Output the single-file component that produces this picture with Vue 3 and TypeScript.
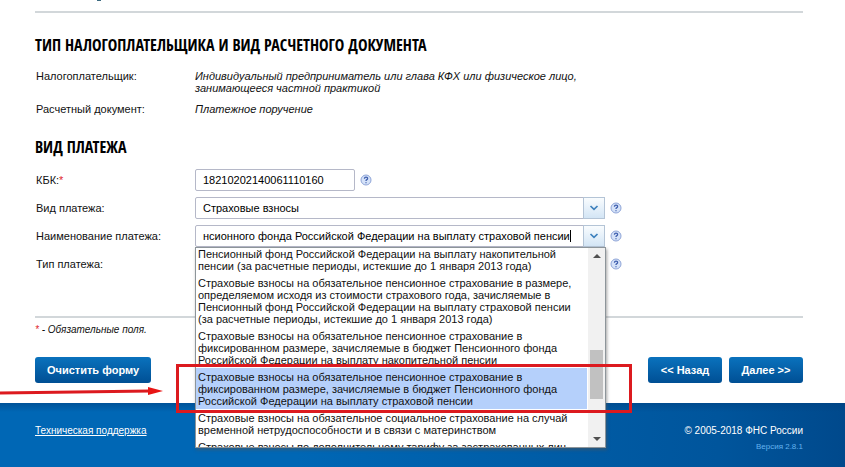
<script setup lang="ts">
import { ref } from 'vue'

interface Option {
  lines: string[]
  selected?: boolean
}

const kbk = ref('18210202140061110160')
const kind = ref('Страховые взносы')
const paymentName = ref('нсионного фонда Российской Федерации на выплату страховой пенсии')

const options: Option[] = [
  {
    lines: [
      'Пенсионный фонд Российской Федерации на выплату накопительной',
      'пенсии (за расчетные периоды, истекшие до 1 января 2013 года)',
    ],
  },
  {
    lines: [
      'Страховые взносы на обязательное пенсионное страхование в размере,',
      'определяемом исходя из стоимости страхового года, зачисляемые в',
      'Пенсионный фонд Российской Федерации на выплату страховой пенсии',
      '(за расчетные периоды, истекшие до 1 января 2013 года)',
    ],
  },
  {
    lines: [
      'Страховые взносы на обязательное пенсионное страхование в',
      'фиксированном размере, зачисляемые в бюджет Пенсионного фонда',
      'Российской Федерации на выплату накопительной пенсии',
    ],
  },
  {
    lines: [
      'Страховые взносы на обязательное пенсионное страхование в',
      'фиксированном размере, зачисляемые в бюджет Пенсионного фонда',
      'Российской Федерации на выплату страховой пенсии',
    ],
    selected: true,
  },
  {
    lines: [
      'Страховые взносы на обязательное социальное страхование на случай',
      'временной нетрудоспособности и в связи с материнством',
    ],
  },
  { lines: ['Страховые взносы по дополнительному тарифу за застрахованных лиц,'] },
]
</script>

<template>
  <div class="page">
    <main class="content">
      <div class="top"><i class="tail"></i></div>

      <h2>Тип налогоплательщика и вид расчетного документа</h2>
      <dl class="facts">
        <dt>Налогоплательщик:</dt>
        <dd>Индивидуальный предприниматель или глава КФХ или физическое лицо,<br />занимающееся частной практикой</dd>
        <dt>Расчетный документ:</dt>
        <dd>Платежное поручение</dd>
      </dl>

      <h2>Вид платежа</h2>
      <form class="fields" @submit.prevent>
        <label for="kbk">КБК:<span class="req">*</span></label>
        <div class="control">
          <input id="kbk" v-model="kbk" class="box kbk" type="text" />
          <button class="help" type="button" aria-label="?">
            <svg viewBox="0 0 12 12"><circle cx="6" cy="6" r="5" /><path d="M4.4 4.7Q4.5 3.2 6 3.2Q7.7 3.2 7.6 4.6Q7.5 5.4 6.5 5.9Q6 6.2 6 7M6 8.2V9.3" /></svg>
          </button>
        </div>

        <label for="kind">Вид платежа:</label>
        <div class="control">
          <div class="combo">
            <select id="kind" v-model="kind" class="box">
              <option>Страховые взносы</option>
            </select>
            <span class="trigger">
              <svg viewBox="0 0 10 6"><path d="M1.5 1L5 4.3L8.5 1" /></svg>
            </span>
          </div>
          <button class="help" type="button" aria-label="?">
            <svg viewBox="0 0 12 12"><circle cx="6" cy="6" r="5" /><path d="M4.4 4.7Q4.5 3.2 6 3.2Q7.7 3.2 7.6 4.6Q7.5 5.4 6.5 5.9Q6 6.2 6 7M6 8.2V9.3" /></svg>
          </button>
        </div>

        <label for="name">Наименование платежа:</label>
        <div class="control">
          <div class="combo">
            <input id="name" v-model="paymentName" class="box" type="text" role="combobox" aria-expanded="true" aria-controls="name-list" />
            <i class="caret"></i>
            <span class="trigger">
              <svg viewBox="0 0 10 6"><path d="M1.5 1L5 4.3L8.5 1" /></svg>
            </span>
            <div class="dropdown">
              <ul id="name-list" role="listbox">
                <li v-for="(option, i) in options" :key="i" role="option" :aria-selected="!!option.selected" :class="{ selected: option.selected }">
                  <span v-for="line in option.lines" :key="line">{{ line }}</span>
                </li>
              </ul>
              <div class="scrollbar">
                <i class="up"></i>
                <div class="track"><i class="thumb"></i></div>
                <i class="down"></i>
              </div>
            </div>
            <div class="mark"></div>
          </div>
          <button class="help" type="button" aria-label="?">
            <svg viewBox="0 0 12 12"><circle cx="6" cy="6" r="5" /><path d="M4.4 4.7Q4.5 3.2 6 3.2Q7.7 3.2 7.6 4.6Q7.5 5.4 6.5 5.9Q6 6.2 6 7M6 8.2V9.3" /></svg>
          </button>
        </div>

        <label for="type">Тип платежа:</label>
        <div class="control">
          <div class="combo">
            <select id="type" class="box"></select>
          </div>
          <button class="help" type="button" aria-label="?">
            <svg viewBox="0 0 12 12"><circle cx="6" cy="6" r="5" /><path d="M4.4 4.7Q4.5 3.2 6 3.2Q7.7 3.2 7.6 4.6Q7.5 5.4 6.5 5.9Q6 6.2 6 7M6 8.2V9.3" /></svg>
          </button>
        </div>
      </form>

      <p class="note"><span class="req">*</span> - Обязательные поля.</p>

      <div class="actions">
        <button class="btn clear" type="button">Очистить форму</button>
        <button class="btn" type="button">&lt;&lt; Назад</button>
        <button class="btn" type="button">Далее &gt;&gt;</button>
      </div>
    </main>

    <footer>
      <a href="#">Техническая поддержка</a>
      <div class="legal">
        <span>© 2005-2018 ФНС России</span>
        <small>Версия 2.8.1</small>
      </div>
    </footer>

    <svg class="arrow" viewBox="0 0 163 12"><path class="shaft" d="M0 7L150 5" /><path class="head" d="M148 1L163 5L148 9Z" /></svg>
  </div>
</template>

<style>
body {
  margin: 0;
}
</style>

<style scoped>
.page {
  position: relative;
  display: flex;
  flex-direction: column;
  min-height: 100vh;
  overflow: hidden;
  background: #fff;
  color: #111;
  font: 11px/12px 'Liberation Sans', Arial, sans-serif;
}
.content {
  padding: 0 42px 20px 35px;
}
.top {
  height: 11px;
  border-bottom: 2px solid #d2d7da;
}
.tail {
  display: block;
  width: 4px;
  height: 1px;
  margin-left: 62px;
  background: #3c6a80;
}
h2 {
  margin: 20px 0 0;
  color: #000;
  font: bold 16px/24px 'Open Sans Condensed', 'Roboto Condensed', 'Liberation Sans Narrow', 'Arial Narrow', Roboto, sans-serif;
  text-transform: uppercase;
}
.facts {
  display: grid;
  grid-template-columns: 160px 1fr;
  row-gap: 9px;
  margin: 13px 0 0;
}
.facts + h2 {
  margin-top: 20px;
}
dt,
label {
  padding-left: 1px;
}
dd {
  margin: 0;
  font-style: italic;
}
.fields {
  display: grid;
  grid-template-columns: 160px 1fr;
  row-gap: 6px;
  align-items: center;
  margin-top: 10px;
  padding-bottom: 41px;
  border-bottom: 2px solid #d2d7da;
}
.req {
  color: #e0262c;
}
.control {
  display: flex;
  align-items: center;
  gap: 5px;
}
.combo {
  position: relative;
  display: flex;
  width: 410px;
}
.box {
  box-sizing: border-box;
  width: 100%;
  height: 22px;
  padding: 0 7px;
  border: 1px solid #b5b8c8;
  border-radius: 2px;
  outline: 0;
  appearance: none;
  background: #fff;
  color: #000;
  font: 11px/20px 'Liberation Sans', Arial, sans-serif;
}
.kbk {
  width: 160px;
}
.trigger {
  position: absolute;
  top: 0;
  right: 0;
  display: flex;
  align-items: center;
  justify-content: center;
  box-sizing: border-box;
  width: 22px;
  height: 22px;
  border: 1px solid #b4c4d6;
  background: linear-gradient(#f9fcfe, #d3e5f5);
  pointer-events: none;
}
.trigger svg {
  width: 10px;
  height: 6px;
  fill: none;
  stroke: #3d80bd;
  stroke-width: 1.7;
}
.caret {
  position: absolute;
  top: 5px;
  right: 34px;
  width: 1px;
  height: 12px;
  background: #000;
}
.help {
  width: 12px;
  height: 12px;
  padding: 0;
  border: 0;
  background: none;
}
.help svg {
  display: block;
  width: 12px;
  height: 12px;
  fill: none;
}
.help circle {
  fill: #d5e2f8;
  stroke: #8fa5d8;
}
.help path {
  stroke: #3f5fae;
  stroke-width: 1.3;
}
.dropdown {
  position: absolute;
  z-index: 1;
  top: 22px;
  left: 0;
  display: flex;
  box-sizing: border-box;
  width: 411px;
  height: 201px;
  overflow: hidden;
  border: 1px solid #8d959a;
  background: #fff;
  box-shadow: 1px 2px 3px #5558;
}
ul {
  flex: 1;
  margin: 0;
  padding: 0;
  overflow: hidden;
  list-style: none;
}
li {
  margin-right: 1px;
  padding: 3px 2px 2px;
  color: #111;
}
li:first-child {
  padding-top: 0;
}
li.selected {
  background: #b5d0fb;
}
li span {
  display: block;
  white-space: nowrap;
}
.scrollbar {
  display: flex;
  flex-direction: column;
  align-items: center;
  justify-content: space-between;
  width: 17px;
  padding: 6px 0;
  box-sizing: border-box;
  background: #f1f1f1;
}
.up,
.down {
  border: 4px solid transparent;
}
.up {
  border-top: 0;
  border-bottom-color: #505050;
}
.down {
  border-bottom: 0;
  border-top-color: #505050;
}
.track {
  flex: 1;
  padding-top: 92px;
}
.thumb {
  display: block;
  width: 13px;
  height: 49px;
  background: #c1c1c1;
}
.mark {
  position: absolute;
  z-index: 2;
  top: 139px;
  left: -19px;
  box-sizing: border-box;
  width: 456px;
  height: 49px;
  border: 3px solid #dc1a1f;
  pointer-events: none;
}
.note {
  margin: 6px 0 0;
  font-size: 10px;
  font-style: italic;
}
.actions {
  display: flex;
  gap: 7px;
  margin-top: 21px;
}
.btn {
  min-width: 74px;
  height: 26px;
  padding: 0 12px;
  border: 0;
  border-radius: 3px;
  background: linear-gradient(#0a72bd, #004f94);
  color: #fff;
  font: bold 11px/26px 'Liberation Sans', Arial, sans-serif;
}
.clear {
  margin-right: auto;
}
footer {
  display: flex;
  flex: 1;
  align-items: flex-start;
  justify-content: space-between;
  padding: 22px 42px 10px 35px;
  background: linear-gradient(#00407f88, transparent 9px), linear-gradient(90deg, #0067b5 35%, #00559c 85%, #00498c);
  color: #fff;
  font-size: 10px;
}
footer a {
  color: #fff;
}
.legal {
  display: flex;
  flex-direction: column;
  gap: 4px;
  text-align: right;
}
.legal small {
  color: #62b2ee;
  font-size: 8px;
}
.arrow {
  position: absolute;
  top: 386px;
  left: 0;
  width: 163px;
  height: 12px;
}
.shaft {
  stroke: #dc1a1f;
  stroke-width: 3;
}
.head {
  fill: #e81515;
}
</style>
